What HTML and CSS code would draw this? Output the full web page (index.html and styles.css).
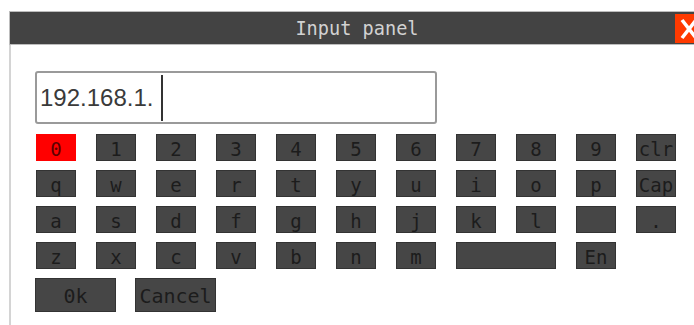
FILE: index.html
```html
<!DOCTYPE html>
<html>
<head>
  <title>Input panel</title>
  <link rel="stylesheet" href="styles.css">
</head>
<body>

<div class="panel">
  <div class="titlebar">
    <span class="title">Input panel</span>
    <div class="close">
      <svg width="20" height="24" viewBox="0 0 20 24">
        <path d="M3 3 L17 21 M17 3 L3 21" stroke="#fff" stroke-width="3.6" fill="none"/>
      </svg>
    </div>
  </div>

  <div class="content">
    <div class="entry"><span class="value">192.168.1.</span><span class="cursor"></span></div>

    <div class="keyboard">
      <div class="row">
        <div class="key active">0</div>
        <div class="key">1</div>
        <div class="key">2</div>
        <div class="key">3</div>
        <div class="key">4</div>
        <div class="key">5</div>
        <div class="key">6</div>
        <div class="key">7</div>
        <div class="key">8</div>
        <div class="key">9</div>
        <div class="key">clr</div>
      </div>
      <div class="row">
        <div class="key">q</div>
        <div class="key">w</div>
        <div class="key">e</div>
        <div class="key">r</div>
        <div class="key">t</div>
        <div class="key">y</div>
        <div class="key">u</div>
        <div class="key">i</div>
        <div class="key">o</div>
        <div class="key">p</div>
        <div class="key">Cap</div>
      </div>
      <div class="row">
        <div class="key">a</div>
        <div class="key">s</div>
        <div class="key">d</div>
        <div class="key">f</div>
        <div class="key">g</div>
        <div class="key">h</div>
        <div class="key">j</div>
        <div class="key">k</div>
        <div class="key">l</div>
        <div class="key"></div>
        <div class="key">.</div>
      </div>
      <div class="row">
        <div class="key">z</div>
        <div class="key">x</div>
        <div class="key">c</div>
        <div class="key">v</div>
        <div class="key">b</div>
        <div class="key">n</div>
        <div class="key">m</div>
        <div class="key space"></div>
        <div class="key">En</div>
      </div>
      <div class="actions">
        <div class="key wide">0k</div>
        <div class="key wide">Cancel</div>
      </div>
    </div>
  </div>
</div>

</body>
</html>
```

FILE: styles.css
```css
body {
  margin: 0;
  background: #fff;
  overflow: hidden;
}

.panel {
  margin: 11px 0 0 9px;
  width: 694px;
  height: 330px;
  border-left: 2px solid #d4d4d4;
}

.titlebar {
  position: relative;
  height: 34px;
  box-sizing: border-box;
  margin-left: -2px;
  background: #434343;
  border: 1px solid #bdbdbd;
  display: flex;
  align-items: center;
  justify-content: center;
}

.title {
  font-family: "DejaVu Sans Mono", monospace;
  font-size: 18.6px;
  color: #d2d2d2;
}

.close {
  position: absolute;
  top: 2px;
  right: -1px;
  width: 30px;
  height: 29px;
  background: #ff3a00;
  display: flex;
  align-items: center;
  justify-content: flex-start;
  padding-left: 4px;
  box-sizing: border-box;
}

.content {
  padding: 26px 0 0 24px;
}

.entry {
  width: 402px;
  height: 53px;
  box-sizing: border-box;
  border: 2px solid #9a9a9a;
  border-radius: 3px;
  display: flex;
  align-items: center;
  padding-left: 3px;
}

.value {
  font-family: "Liberation Sans", Arial, sans-serif;
  font-size: 24px;
  color: #3a3a3a;
}

.cursor {
  display: inline-block;
  width: 2px;
  height: 46px;
  margin-left: 8px;
  background: #333;
}

.keyboard {
  margin: 10px 0 0 1px;
  display: flex;
  flex-direction: column;
  gap: 9px;
}

.row {
  display: flex;
  gap: 20px;
}

.key {
  width: 40px;
  height: 27px;
  box-sizing: border-box;
  background: #464646;
  border: 1px solid #333;
  display: flex;
  align-items: center;
  justify-content: center;
  padding-top: 2px;
  font-family: "DejaVu Sans Mono", monospace;
  font-size: 19px;
  color: #1c1c1c;
}

.key.active {
  background: #ff0000;
  border-color: #f00;
  color: #5a0000;
}

.key.space {
  width: 100px;
}

.actions {
  display: flex;
  gap: 19px;
  margin-left: -1px;
}

.key.wide {
  width: 81px;
  height: 34px;
  font-size: 20px;
}
```
